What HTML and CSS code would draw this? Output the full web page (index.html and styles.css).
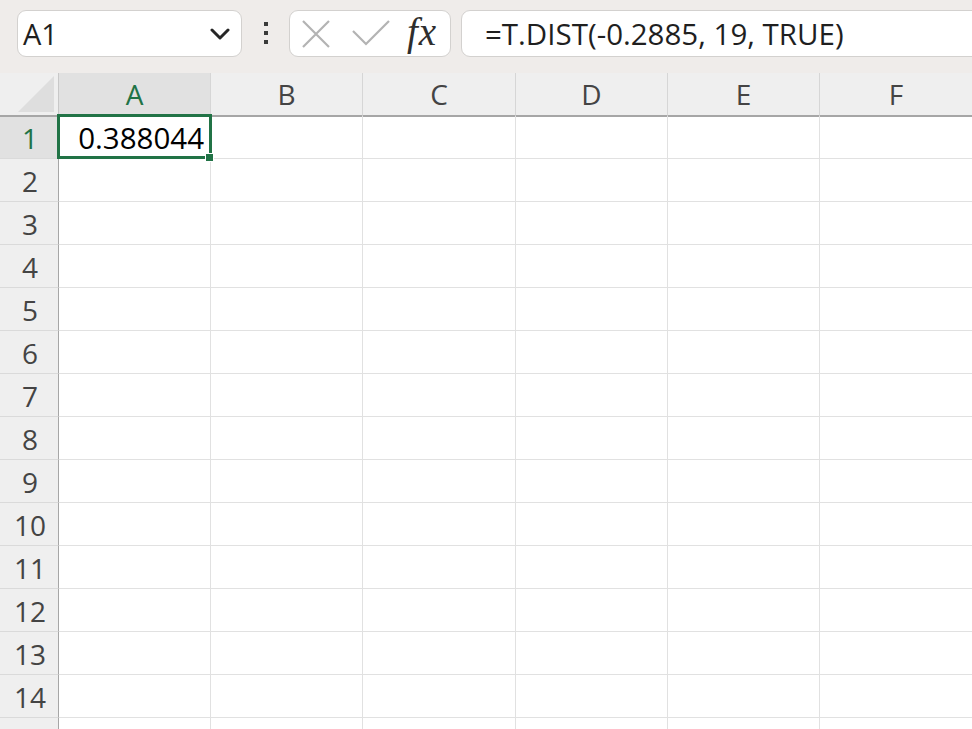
FILE: index.html
```html
<!DOCTYPE html>
<html>
<head>
<meta charset="utf-8">
<link rel="stylesheet" href="styles.css">
</head>
<body>
<div class="toolbar">
  <div class="namebox">
    <span class="namebox-text">A1</span>
    <svg class="chevron" width="20" height="12" viewBox="0 0 20 12"><path d="M2 2 L10 10 L18 2" fill="none" stroke="#262626" stroke-width="3" stroke-linecap="round" stroke-linejoin="round"/></svg>
  </div>
  <div class="dots"><span></span><span></span><span></span></div>
  <div class="fxbox">
    <svg class="icon-x" width="28" height="28" viewBox="0 0 28 28"><path d="M1 1 L27 27 M27 1 L1 27" stroke="#b3b3b3" stroke-width="2.2" fill="none"/></svg>
    <svg class="icon-check" width="38" height="26" viewBox="0 0 38 26"><path d="M1 11 L14 24 L37 1" stroke="#b3b3b3" stroke-width="2.2" fill="none"/></svg>
    <span class="fx">fx</span>
  </div>
  <div class="formula">=T.DIST(-0.2885, 19, TRUE)</div>
</div>
<div class="sheet">
  <div class="corner"><div class="tri"></div></div>
  <div class="colhead active">A</div>
  <div class="colhead">B</div>
  <div class="colhead">C</div>
  <div class="colhead">D</div>
  <div class="colhead">E</div>
  <div class="colhead last">F</div>
</div>
<div class="grid" id="grid"></div>
<script src="app.js"></script>
</body>
</html>
```
FILE: app.js
```js
var g = document.getElementById('grid');
var html = '';
for (var r = 1; r <= 15; r++) {
  html += '<div class="rowhead' + (r === 1 ? ' active' : '') + '">' + (r <= 14 ? r : '') + '</div>';
  for (var c = 0; c < 6; c++) {
    if (r === 1 && c === 0) {
      html += '<div class="cell sel"><span class="val">0.388044</span><span class="handle"></span></div>';
    } else {
      html += '<div class="cell' + (c === 5 ? ' last' : '') + '"></div>';
    }
  }
}
g.innerHTML = html;
```
FILE: styles.css
```css
html, body {
  margin: 0;
  padding: 0;
  background: #ffffff;
  overflow: hidden;
  width: 972px;
  height: 729px;
}
body {
  font-family: "Open Sans", "Noto Sans", sans-serif;
  color: #1f1f1f;
}
.toolbar {
  height: 73px;
  box-sizing: border-box;
  background: #efecea;
  display: flex;
  align-items: flex-start;
  padding: 10px 0 0 17px;
}
.namebox {
  width: 225px;
  height: 47px;
  box-sizing: border-box;
  background: #fff;
  border: 1px solid #d3d1cf;
  border-radius: 9px;
  display: flex;
  align-items: center;
  justify-content: space-between;
  padding: 0 11px 0 5px;
}
.namebox-text {
  font-size: 29px;
  color: #1f1f1f;
}
.chevron { display: block; }
.dots {
  width: 47px;
  height: 47px;
  display: flex;
  flex-direction: column;
  align-items: center;
  padding-top: 12px;
  box-sizing: border-box;
  gap: 5px;
}
.dots span {
  width: 4px;
  height: 4px;
  background: #3a3a3a;
  display: block;
}
.fxbox {
  width: 162px;
  height: 47px;
  box-sizing: border-box;
  background: #fff;
  border: 1px solid #d3d1cf;
  border-radius: 9px;
  display: flex;
  align-items: center;
  padding-left: 12px;
}
.icon-x { margin-right: 22px; }
.icon-check { margin-right: 17px; margin-top: -2px; }
.fx {
  font-family: "Liberation Serif", "DejaVu Serif", serif;
  font-style: italic;
  font-size: 39px;
  color: #2e2e2e;
  line-height: 1;
  margin-top: -5px;
  letter-spacing: 1px;
}
.formula {
  flex: 1;
  margin-left: 10px;
  margin-right: -12px;
  height: 47px;
  box-sizing: border-box;
  background: #fff;
  border: 1px solid #d3d1cf;
  border-radius: 9px;
  padding-left: 23px;
  font-size: 29.5px;
  line-height: 45px;
  color: #1f1f1f;
}
.sheet {
  display: grid;
  grid-template-columns: 59px 152px 152px 153px 152px 152px 152px;
  height: 42px;
}
.corner {
  background: #efefef;
  border-right: 1px solid #c8c8c8;
  border-bottom: 2px solid #a6a6a6;
  box-sizing: border-box;
  position: relative;
  overflow: hidden;
}
.tri {
  position: absolute;
  right: 4px;
  bottom: 3px;
  width: 0;
  height: 0;
  border-left: 36px solid transparent;
  border-bottom: 36px solid #dedede;
}
.colhead {
  background: #efefef;
  border-right: 1px solid #d6d6d6;
  border-bottom: 2px solid #a6a6a6;
  box-sizing: border-box;
  text-align: center;
  font-size: 28px;
  line-height: 42px;
  color: #444;
}
.colhead.active {
  background: #e1e1e1;
  color: #217346;
}
.colhead.last { border-right: none; }
.grid {
  display: grid;
  grid-template-columns: 59px 152px 152px 153px 152px 152px 152px;
  grid-auto-rows: 43px;
  margin-top: 1px;
}
.rowhead {
  background: #efefef;
  border-right: 1px solid #a6a6a6;
  border-bottom: 1px solid #dadada;
  box-sizing: border-box;
  text-align: center;
  font-size: 28px;
  line-height: 44px;
  color: #444;
  padding-left: 2px;
}
.rowhead.active {
  background: #e1e1e1;
  color: #217346;
}
.cell {
  border-right: 1px solid #e1e1e1;
  border-bottom: 1px solid #e1e1e1;
  box-sizing: border-box;
}
.cell.last { border-right: none; }
.cell.sel {
  position: relative;
  text-align: right;
}
.cell.sel::after {
  content: "";
  position: absolute;
  left: -2px;
  top: -2px;
  right: -2px;
  bottom: -1px;
  border: 3px solid #217346;
}
.val {
  display: block;
  font-size: 29.5px;
  line-height: 44px;
  padding-right: 6px;
  color: #000;
}
.handle {
  position: absolute;
  width: 7px;
  height: 7px;
  right: -4px;
  bottom: -4px;
  background: #217346;
  border: 1px solid #fff;
  z-index: 2;
}
```
